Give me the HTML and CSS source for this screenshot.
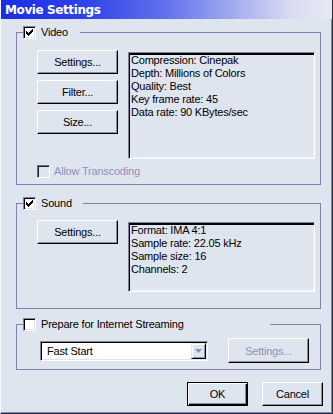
FILE: index.html
```html
<!DOCTYPE html>
<html>
<head>
<meta charset="utf-8">
<title>Movie Settings</title>
<link rel="stylesheet" href="styles.css">
</head>
<body>
<div class="window">
  <div class="titlebar"><span class="title">Movie Settings</span></div>
  <div class="client">
    <fieldset class="group">
      <legend class="legend"><span class="legend-inner legend-video"><span class="check"><svg width="7" height="7" viewBox="0 0 7 7"><g fill="#000"><rect x="0" y="2" width="1" height="3"/><rect x="1" y="3" width="1" height="3"/><rect x="2" y="4" width="1" height="3"/><rect x="3" y="3" width="1" height="3"/><rect x="4" y="2" width="1" height="3"/><rect x="5" y="1" width="1" height="3"/><rect x="6" y="0" width="1" height="3"/></g></svg></span><span class="legend-text">Video</span></span></legend>
      <div class="body body-video">
        <div class="row">
          <div class="btn-col">
            <button class="btn">Settings...</button>
            <button class="btn">Filter...</button>
            <button class="btn">Size...</button>
          </div>
          <div class="info info-video">Compression: Cinepak<br>Depth: Millions of Colors<br>Quality: Best<br>Key frame rate: 45<br>Data rate: 90 KBytes/sec</div>
        </div>
        <div class="option">
          <span class="check check-disabled"></span>
          <span class="option-text disabled-text">Allow Transcoding</span>
        </div>
      </div>
    </fieldset>

    <fieldset class="group group-sound">
      <legend class="legend"><span class="legend-inner legend-sound"><span class="check"><svg width="7" height="7" viewBox="0 0 7 7"><g fill="#000"><rect x="0" y="2" width="1" height="3"/><rect x="1" y="3" width="1" height="3"/><rect x="2" y="4" width="1" height="3"/><rect x="3" y="3" width="1" height="3"/><rect x="4" y="2" width="1" height="3"/><rect x="5" y="1" width="1" height="3"/><rect x="6" y="0" width="1" height="3"/></g></svg></span><span class="legend-text">Sound</span></span></legend>
      <div class="body body-sound">
        <div class="row">
          <div class="btn-col">
            <button class="btn">Settings...</button>
          </div>
          <div class="info info-sound">Format: IMA 4:1<br>Sample rate: 22.05 kHz<br>Sample size: 16<br>Channels: 2</div>
        </div>
      </div>
    </fieldset>

    <fieldset class="group group-stream">
      <legend class="legend"><span class="legend-inner legend-stream"><span class="check"></span><span class="legend-text">Prepare for Internet Streaming</span></span></legend>
      <div class="body body-stream">
        <div class="stream-row">
          <div class="select">
            <span class="select-text">Fast Start</span>
            <span class="drop-btn"><svg width="7" height="4" viewBox="0 0 7 4"><path d="M0 0H7L3.5 4Z" fill="#8a90b4"/></svg></span>
          </div>
          <button class="btn btn-disabled">Settings...</button>
        </div>
      </div>
    </fieldset>

    <div class="footer">
      <button class="btn btn-footer btn-default">OK</button>
      <button class="btn btn-footer">Cancel</button>
    </div>
  </div>
</div>
</body>
</html>
```

FILE: styles.css
```css
* { box-sizing: border-box; }

html, body {
  margin: 0;
  padding: 0;
}

body {
  width: 333px;
  height: 414px;
  overflow: hidden;
  background: #dfe5ef;
  font-family: "Liberation Sans", Arial, sans-serif;
  font-size: 11px;
  letter-spacing: -0.2px;
  color: #000;
}

.window {
  width: 333px;
  height: 414px;
  display: flex;
  flex-direction: column;
  background: #dfe5ef;
  border-left: 1px solid #f6f8fc;
  border-right: 1px solid #2a2a3e;
  border-bottom: 1px solid #2a2a3e;
  box-shadow: inset -1px -1px 0 #8088b0;
}

.titlebar {
  height: 19px;
  flex: none;
  display: flex;
  align-items: center;
  padding-left: 4px;
  padding-top: 1px;
  background: linear-gradient(90deg, #1a2de4 0%, #2e42e8 25%, #6272ee 50%, #a8b0f0 72%, #d8dcf2 88%, #e8eaf2 100%);
}

.title {
  color: #fff;
  font-family: "DejaVu Sans", Verdana, sans-serif;
  font-weight: bold;
  font-size: 12px;
  letter-spacing: -0.4px;
}

.client {
  display: flex;
  flex-direction: column;
  padding: 7px 11px 0 15px;
}

.group {
  margin: 0;
  padding: 0;
  min-width: 0;
  border: 1px solid #8282b2;
}

.group-sound { margin-top: 12px; }
.group-stream { margin-top: 9px; }

.legend {
  padding: 0;
  margin-left: 6px;
  height: 13px;
}

.legend-inner {
  display: flex;
  align-items: center;
  height: 13px;
}

.legend-video { width: 57px; }
.legend-sound { width: 60px; }
.legend-stream { width: 247px; }

.legend-text {
  margin-left: 5px;
  line-height: 13px;
}

.check {
  width: 13px;
  height: 13px;
  flex: none;
  display: flex;
  align-items: center;
  justify-content: center;
  background: #fff;
  border: 1px solid;
  border-color: #80809a #fff #fff #80809a;
  box-shadow: inset 1px 1px 0 #000, inset -1px -1px 0 #dfe5ef;
}

.check svg { display: block; }

.check-disabled {
  background: #dfe5ef;
  border-color: #6a6a80 #fff #fff #6a6a80;
  box-shadow: inset 1px 1px 0 #202030, inset -1px -1px 0 #dfe5ef;
}

.body-video { padding: 11px 5px 6px 20px; }
.body-sound { padding: 10px 5px 16px 20px; }
.body-stream { padding: 7px 5px 6px 23px; }

.row {
  display: flex;
  align-items: flex-start;
  gap: 10px;
}

.btn-col {
  display: flex;
  flex-direction: column;
  gap: 6px;
  flex: none;
}

.btn {
  width: 81px;
  height: 24px;
  padding: 0;
  margin: 0;
  background: #dfe5ef;
  border: 1px solid;
  border-color: #fff #000 #000 #fff;
  box-shadow: inset -1px -1px 0 #8890a8;
  font: inherit;
  letter-spacing: inherit;
  color: #000;
  text-align: center;
}

.btn-disabled { color: #8c92c0; height: 25px; }

.info {
  flex: 1;
  margin-top: 2px;
  background: #dfe5ef;
  border: 1px solid;
  border-color: #80809a #fff #fff #80809a;
  box-shadow: inset 1px 1px 0 #000, inset 0 2px 0 #000, inset -1px -1px 0 #eef1f7;
  padding: 1px 2px 0 2px;
  line-height: 13px;
  white-space: nowrap;
}

.info-video { height: 107px; }
.info-sound { height: 70px; }

.option {
  display: flex;
  align-items: center;
  margin-top: 6px;
  height: 13px;
}

.option-text {
  margin-left: 4px;
  line-height: 13px;
}

.disabled-text { color: #8c92c0; }

.stream-row {
  display: flex;
  align-items: center;
  gap: 20px;
  height: 25px;
}

.select {
  width: 168px;
  height: 20px;
  display: flex;
  align-items: center;
  background: #fff;
  border: 1px solid;
  border-color: #80809a #fff #fff #80809a;
  box-shadow: inset 1px 1px 0 #000, inset -1px -1px 0 #dfe5ef;
  padding: 2px 1px 2px 6px;
}

.select-text {
  flex: 1;
  line-height: 14px;
}

.drop-btn {
  width: 15px;
  height: 16px;
  display: flex;
  align-items: center;
  justify-content: center;
  background: #dfe5ef;
  border: 1px solid;
  border-color: #dfe5ef #000 #000 #dfe5ef;
  box-shadow: inset 1px 1px 0 #fff, inset -1px -1px 0 #8890a8;
}

.footer {
  display: flex;
  justify-content: flex-end;
  gap: 14px;
  margin-top: 12px;
  margin-right: -2px;
}

.btn-footer { width: 61px; }

.btn-default {
  border: 1px solid #000;
  box-shadow: inset 1px 1px 0 #fff, inset -1px -1px 0 #000, inset -2px -2px 0 #8890a8;
}
```
